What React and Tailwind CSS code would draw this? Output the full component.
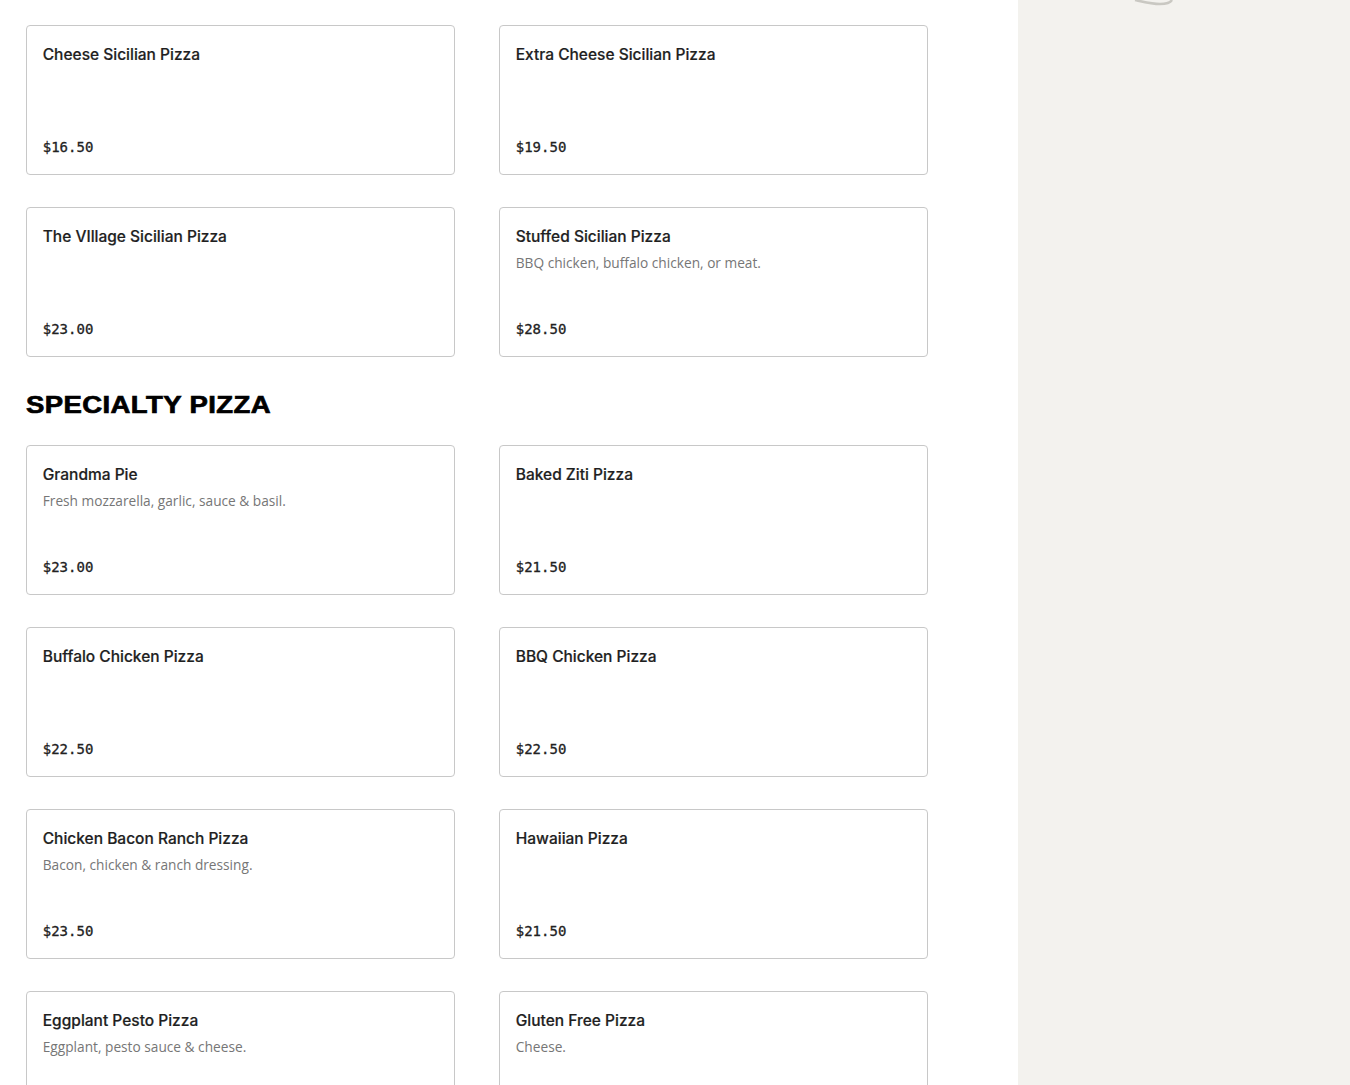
const SICILIAN = [
  { name: "Cheese Sicilian Pizza", price: "$16.50" },
  { name: "Extra Cheese Sicilian Pizza", price: "$19.50" },
  { name: "The VIllage Sicilian Pizza", price: "$23.00" },
  { name: "Stuffed Sicilian Pizza", desc: "BBQ chicken, buffalo chicken, or meat.", price: "$28.50" },
];

const SPECIALTY = [
  { name: "Grandma Pie", desc: "Fresh mozzarella, garlic, sauce & basil.", price: "$23.00" },
  { name: "Baked Ziti Pizza", price: "$21.50" },
  { name: "Buffalo Chicken Pizza", price: "$22.50" },
  { name: "BBQ Chicken Pizza", price: "$22.50" },
  { name: "Chicken Bacon Ranch Pizza", desc: "Bacon, chicken & ranch dressing.", price: "$23.50" },
  { name: "Hawaiian Pizza", price: "$21.50" },
  { name: "Eggplant Pesto Pizza", desc: "Eggplant, pesto sauce & cheese.", price: "" },
  { name: "Gluten Free Pizza", desc: "Cheese.", price: "" },
];

function MenuCard({ item }) {
  return (
    <div className="flex h-[150px] flex-col rounded-[4px] border border-[#c8c8c8] bg-white pt-[19px] pr-4 pb-[18px] pl-[15.75px]">
      <h3 className="text-[15.5px] leading-[20px] font-medium text-[#1f1f1f] [font-family:Inter,sans-serif] [-webkit-text-stroke:0.2px_#1f1f1f]">{item.name}</h3>
      {item.desc && (
        <p className="mt-[7px] text-[13.7px] leading-[18px] text-[#767676] [font-family:'Open_Sans',sans-serif]">{item.desc}</p>
      )}
      <p className="mt-auto text-[14px] leading-[18px] font-medium text-[#222222] [font-family:'DejaVu_Sans_Mono',monospace] [-webkit-text-stroke:0.3px_#222222]">{item.price}</p>
    </div>
  );
}

function MenuGrid({ items }) {
  return (
    <div className="grid w-[902px] grid-cols-2 gap-x-[44px] gap-y-[32px]">
      {items.map((item) => (
        <MenuCard key={item.name} item={item} />
      ))}
    </div>
  );
}

export default function App() {
  return (
    <div className="flex h-[1085px] overflow-hidden bg-white">
      <main className="flex-1 pt-[25px] pl-[26px]">
        <MenuGrid items={SICILIAN} />
        <h2 className="mt-[32px] mb-[23px] origin-left scale-x-[1.17] text-[23.5px] leading-[33px] font-bold tracking-[0.35px] text-black [font-family:'Liberation_Sans',sans-serif] [-webkit-text-stroke:0.7px_#000000]">
          SPECIALTY PIZZA
        </h2>
        <MenuGrid items={SPECIALTY} />
      </main>
      <aside className="relative w-[332px] bg-[#f3f2ee]">
        <svg className="absolute top-0 left-[110px]" width="60" height="8" viewBox="0 0 60 8" fill="none">
          <path d="M7 0 C 14 1.5, 24 4, 32 4 C 38 4, 42 3, 44 0" stroke="#c9c8c2" strokeWidth="2.5" />
        </svg>
      </aside>
    </div>
  );
}
